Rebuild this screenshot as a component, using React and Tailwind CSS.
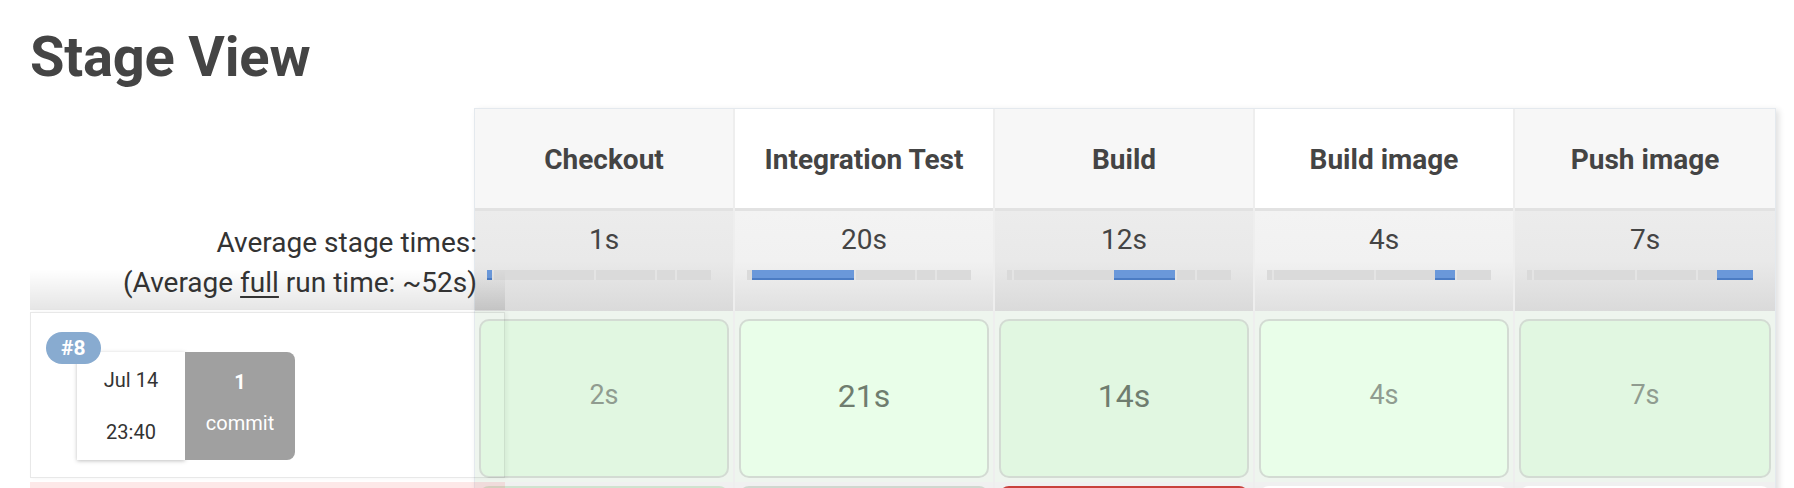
import React from 'react';

const stages = [
  { name: 'Checkout', avg: '1s', secs: 1, run: '2s', big: false },
  { name: 'Integration Test', avg: '20s', secs: 20, run: '21s', big: true },
  { name: 'Build', avg: '12s', secs: 12, run: '14s', big: true },
  { name: 'Build image', avg: '4s', secs: 4, run: '4s', big: false },
  { name: 'Push image', avg: '7s', secs: 7, run: '7s', big: false },
];

const total = stages.reduce((s, x) => s + x.secs, 0);

// one average bar, the stage's own share is blue
const AvgBar = ({ active }) => (
  <div className="ml-[12px] mr-[22px] flex h-[10px] overflow-hidden bg-[#d6d6d6] shadow-[inset_0_1px_1px_rgba(0,0,0,0.12)]">
    {stages.map((s, i) => (
      <div
        key={s.name}
        style={{ width: `${(s.secs / total) * 100}%` }}
        className={
          i === active
            ? 'h-full bg-[#6a98da] border-b-2 border-[#4b7cc4]'
            : 'h-full border-l-2 border-[#e4e4e4] bg-[#dadada] first:border-l-0'
        }
      />
    ))}
  </div>
);

export default function App() {
  return (
    <div
      className="h-[488px] overflow-hidden bg-white pl-[30px] text-[#444]"
      style={{ fontFamily: 'Roboto, "Liberation Sans", sans-serif' }}
    >
      <h2 className="pt-[24px] text-[56px] font-bold leading-[66px] tracking-[-0.2px] text-[#444]">
        Stage View
      </h2>

      <div className="mt-[18px] flex">
        {/* left fixed column, lies over the table's left edge */}
        <div className="relative z-10 mr-[-31px] flex w-[475px] shrink-0 flex-col">
          <div className="h-[99px]" />
          <div className="h-[103px] bg-gradient-to-b from-transparent from-60% to-[rgba(0,0,0,0.1)] pr-[28px] pt-[16px] text-right text-[28px] leading-[40px] text-[#333]">
            <div>Average stage times:</div>
            <div>
              (Average <span className="underline underline-offset-4">full</span> run time: ~52s)
            </div>
          </div>
          <div className="relative mt-[2px] h-[166px] border border-[rgba(0,0,0,0.09)] shadow-[2px_0_4px_rgba(0,0,0,0.05)]">
            <div className="ml-[46px] mt-[39px] flex">
              <div className="flex h-[108px] w-[108px] flex-col items-center justify-center gap-[32px] bg-white text-[20px] text-[#333] shadow-[0_1px_4px_rgba(0,0,0,0.25)]">
                <span className="leading-none">Jul 14</span>
                <span className="leading-none">23:40</span>
              </div>
              <div className="flex h-[108px] w-[110px] flex-col items-center justify-center gap-[21px] rounded-r-[8px] bg-[#a0a0a0] pb-[8px] text-[20px] text-white">
                <span className="font-bold leading-none">1</span>
                <span className="leading-none">commit</span>
              </div>
            </div>
            <div className="absolute left-[15px] top-[19px] rounded-full bg-[#88abd0] px-[15px] py-[3px] text-[21px] font-bold leading-[26px] text-white">
              #8
            </div>
          </div>
          <div className="mt-[4px] h-[160px] bg-[rgba(240,80,80,0.13)]" />
        </div>

        {/* stage table */}
        <div className="flex border border-[#e4e9ee] shadow-[3px_2px_6px_rgba(0,0,0,0.12)]">
          {stages.map((s, i) => {
            const odd = i % 2 === 0;
            return (
              <div key={s.name} className="flex w-[260px] flex-col border-r-2 border-[#eeeeee] last:border-r-0">
                <div
                  className={`flex h-[99px] items-center justify-center pt-[2px] text-[28px] font-bold text-[#444] ${
                    odd ? 'bg-[#f7f7f7]' : 'bg-white'
                  }`}
                >
                  {s.name}
                </div>
                <div
                  className={`h-[103px] border-t-[3px] border-[#e2e2e2] pt-[14px] bg-gradient-to-b ${
                    odd ? 'from-[#ececec] via-[#e9e9e9] to-[#dadada]' : 'from-[#f3f3f3] via-[#f1f1f1] to-[#e0e0e0]'
                  }`}
                >
                  <div className="text-center text-[28px] leading-[30px] text-[#444]">{s.avg}</div>
                  <div className="mt-[15px]">
                    <AvgBar active={i} />
                  </div>
                </div>
                <div className="bg-[#eef5ee] px-[4px] pb-[4px] pt-[8px]">
                  <div
                    className={`flex h-[159px] items-center justify-center rounded-[10px] border-2 border-[#d3dbd3] pb-[6px] ${
                      odd ? 'bg-[#e1f7e1]' : 'bg-[#e9fee9]'
                    } ${s.big ? 'text-[32px] text-[#6f7d6f]' : 'text-[27px] text-[#909c90]'}`}
                  >
                    {s.run}
                  </div>
                </div>
                <div className="bg-[#f0f0f0] px-[4px] pt-[4px]">
                  <div
                    className={`h-[150px] rounded-t-[10px] border-2 ${
                      i === 0
                        ? 'border-[#cfe3cf] bg-[#e1f7e1]'
                        : i === 1
                        ? 'border-[#cfd8cf] bg-[#e9fee9]'
                        : i === 2
                        ? 'border-[#c9413c] bg-[#d9534f]'
                        : 'border-white bg-white'
                    }`}
                  />
                </div>
              </div>
            );
          })}
        </div>
      </div>
    </div>
  );
}
